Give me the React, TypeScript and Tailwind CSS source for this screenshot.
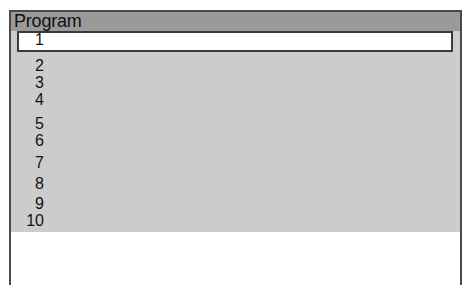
export default function App() {
  const rows: { n: number; h: number }[] = [
    { n: 2, h: 17 },
    { n: 3, h: 17 },
    { n: 4, h: 24 },
    { n: 5, h: 17 },
    { n: 6, h: 22 },
    { n: 7, h: 21 },
    { n: 8, h: 20 },
    { n: 9, h: 17 },
    { n: 10, h: 21 },
  ];
  const heights: Record<number, string> = {
    17: "h-[17px]",
    20: "h-[20px]",
    21: "h-[21px]",
    22: "h-[22px]",
    24: "h-[24px]",
  };
  return (
    <div
      className="w-[468px] h-[290px] bg-white pt-[10px] pl-[9px]"
      style={{ fontFamily: '"Liberation Sans", Arial, sans-serif' }}
    >
      <div className="w-[453px] h-[275px] border-t-2 border-l-2 border-r-2 border-[#4a4a4a] flex flex-col">
        <div className="h-[19px] bg-[#9a9a9a] pl-[3px] text-[18px] leading-[19px] text-[#111] tracking-[-0.2px]">
          Program
        </div>
        <div className="bg-[#cccccc] h-[201px] flex flex-col">
          <div className="ml-[6px] mr-[7px] h-[21px] bg-white border-2 border-[#3a3a3a] flex text-[16px] leading-[13px] text-[#111]">
            <span className="w-[25px] text-right">1</span>
          </div>
          <div className="h-[4px]" />
          {rows.map((r) => (
            <div
              key={r.n}
              className={`${heights[r.h]} flex text-[16px] leading-[19px] text-[#111]`}
            >
              <span className="w-[33px] text-right">{r.n}</span>
            </div>
          ))}
        </div>
      </div>
    </div>
  );
}
